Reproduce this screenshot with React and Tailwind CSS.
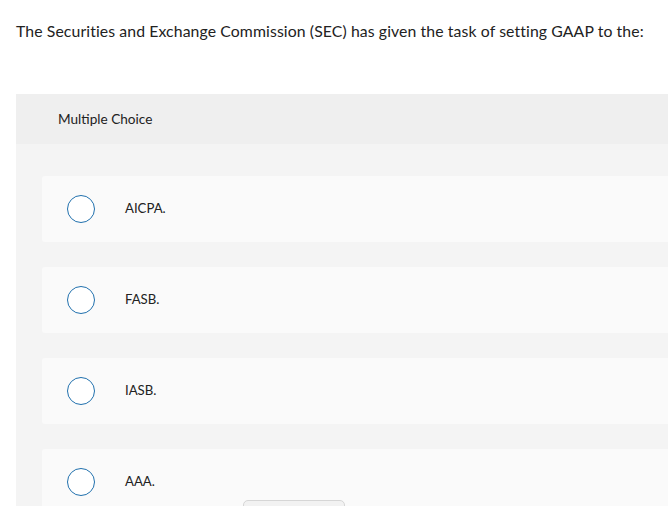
import React from "react";

const options = ["AICPA.", "FASB.", "IASB.", "AAA."];

export default function App() {
  return (
    <div className="relative w-[668px] h-[506px] overflow-hidden bg-white text-[#222]" style={{ fontFamily: "Lato, 'Liberation Sans', sans-serif" }}>
      <p className="pl-4 pt-[20px] text-[15.8px] leading-[22px] tracking-[0.1px] whitespace-nowrap">
        The Securities and Exchange Commission (SEC) has given the task of setting GAAP to the:
      </p>
      <div className="ml-4 mt-[52px] w-[700px] bg-[#f4f4f4]">
        <div className="h-[50px] bg-[#efefef] flex items-center pl-[42px] pt-[1px] text-[13.6px]">Multiple Choice</div>
        <div className="pl-[26px] pt-[32px] flex flex-col gap-[25px]">
          {options.map((o) => (
            <div key={o} className="h-[66px] bg-[#fafafa] rounded-l-[3px] flex items-center pl-[25px]">
              <span className="w-[28px] h-[28px] rounded-full border-[1.5px] border-[#2070ad] bg-white shrink-0" />
              <span className="ml-[30px] text-[13.2px]">{o}</span>
            </div>
          ))}
        </div>
      </div>
      <div className="absolute left-[243px] top-[500px] w-[102px] h-[20px] rounded-t-[5px] border border-[#d6d6d6] bg-[#f2f2f2]" />
    </div>
  );
}
